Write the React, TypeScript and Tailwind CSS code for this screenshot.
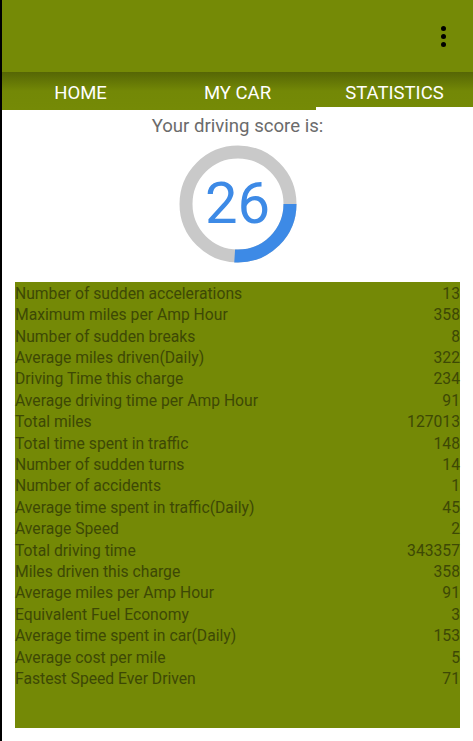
import React from "react";

const stats: [string, string][] = [
  ["Number of sudden accelerations", "13"],
  ["Maximum miles per Amp Hour", "358"],
  ["Number of sudden breaks", "8"],
  ["Average miles driven(Daily)", "322"],
  ["Driving Time this charge", "234"],
  ["Average driving time per Amp Hour", "91"],
  ["Total miles", "127013"],
  ["Total time spent in traffic", "148"],
  ["Number of sudden turns", "14"],
  ["Number of accidents", "1"],
  ["Average time spent in traffic(Daily)", "45"],
  ["Average Speed", "2"],
  ["Total driving time", "343357"],
  ["Miles driven this charge", "358"],
  ["Average miles per Amp Hour", "91"],
  ["Equivalent Fuel Economy", "3"],
  ["Average time spent in car(Daily)", "153"],
  ["Average cost per mile", "5"],
  ["Fastest Speed Ever Driven", "71"],
];

// ring gauge, arc starts at 3 o'clock and runs clockwise
const ScoreRing = ({ score }: { score: number }) => {
  const r = 52;
  const c = 2 * Math.PI * r;
  return (
    <div className="relative h-[118px] w-[118px]">
      <svg width="118" height="118" viewBox="0 0 118 118">
        <circle cx="59" cy="59" r={r} fill="none" stroke="#c9c9c9" strokeWidth="13" />
        <circle
          cx="59"
          cy="59"
          r={r}
          fill="none"
          stroke="#3d8ae6"
          strokeWidth="13"
          strokeDasharray={`${(c * score) / 100} ${c}`}
        />
      </svg>
      <div className="absolute inset-0 flex items-center justify-center pb-[3px] text-[58px] leading-none text-[#3d8ae6]">
        {score}
      </div>
    </div>
  );
};

export default function App() {
  const tabs = ["HOME", "MY CAR", "STATISTICS"];
  return (
    <div
      className="flex h-[741px] w-[473px] flex-col overflow-hidden border-l-2 border-black bg-white"
      style={{ fontFamily: "Roboto, 'Liberation Sans', sans-serif" }}
    >
      {/* Action bar */}
      <div className="flex h-[72px] items-center justify-end bg-[#758a06] pr-[27px]">
        <div className="flex flex-col gap-[3px]">
          <span className="h-[5px] w-[5px] rounded-full bg-black" />
          <span className="h-[5px] w-[5px] rounded-full bg-black" />
          <span className="h-[5px] w-[5px] rounded-full bg-black" />
        </div>
      </div>

      {/* Tabs */}
      <div className="grid h-[38px] grid-cols-3 bg-gradient-to-b from-[#566605] via-[#738806] to-[#758a06] text-[18.5px] text-white">
        {tabs.map((t, i) => (
          <div key={t} className="relative flex items-center justify-center pt-[6px]">
            {t}
            {i === 2 && <div className="absolute bottom-0 left-0 right-0 h-[3px] bg-white" />}
          </div>
        ))}
      </div>

      {/* Score */}
      <div className="flex flex-col items-center">
        <p className="mt-[5px] text-[18.6px] leading-[22px] text-[#6b6b6b]">Your driving score is:</p>
        <div className="mt-[8px]">
          <ScoreRing score={26} />
        </div>
      </div>

      {/* Statistics list */}
      <div className="mx-[13px] mt-[19px] h-[446px] bg-[#748906] pt-[1px]">
        {stats.map(([label, value]) => (
          <div key={label} className="flex h-[21.4px] items-center justify-between text-[15.7px] text-[#3d4805]">
            <span>{label}</span>
            <span>{value}</span>
          </div>
        ))}
      </div>
    </div>
  );
}
